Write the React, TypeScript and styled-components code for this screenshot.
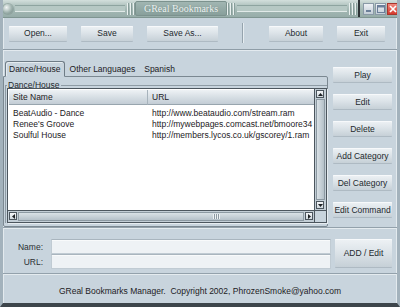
import React from "react"
import styled, { createGlobalStyle } from "styled-components"

const GlobalStyle = createGlobalStyle`
  html, body {
    margin: 0;
    padding: 0;
    background: #c8d4dd;
  }
  body {
    font-family: "Liberation Sans", Arial, sans-serif;
    font-size: 8.5px;
    color: #1d2124;
  }
  * {
    box-sizing: border-box;
  }
`

const bookmarks = [
  { name: "BeatAudio - Dance", url: "http://www.beataudio.com/stream.ram" },
  { name: "Renee's Groove", url: "http://mywebpages.comcast.net/bmoore34" },
  { name: "Soulful House", url: "http://members.lycos.co.uk/gscorey/1.ram" },
]

const sideActions = ["Play", "Edit", "Delete", "Add Category", "Del Category", "Edit Command"]

export default function App() {
  return (
    <>
      <GlobalStyle />
      <Window>
        <TitleBar>
          <TitleOrb />
          <TitleStripe />
          <Grip />
          <TitleLabel>GReal Bookmarks</TitleLabel>
          <Grip />
          <TitleStripe />
          <Grip />
          <TitleDivider />
          <TitleButton>
            <svg width="8" height="8" viewBox="0 0 8 8">
              <rect x="1" y="5" width="5" height="2" fill="#6b7f99" />
            </svg>
          </TitleButton>
          <TitleButton>
            <svg width="8" height="8" viewBox="0 0 8 8">
              <rect x="0.5" y="0.5" width="7" height="7" fill="none" stroke="#6b7f99" />
              <rect x="0.5" y="0.5" width="7" height="2" fill="#6b7f99" />
            </svg>
          </TitleButton>
          <TitleButton $close>
            <svg width="8" height="8" viewBox="0 0 8 8">
              <path d="M1 1 L7 7 M7 1 L1 7" stroke="#fff" strokeWidth="1.6" />
            </svg>
          </TitleButton>
        </TitleBar>

        <Toolbar>
          <Button $w={58}>Open...</Button>
          <Button $w={52} $ml={14}>Save</Button>
          <Button $w={71} $ml={14}>Save As...</Button>
          <ToolSeparator />
          <Button $w={54}>About</Button>
          <Button $w={48} $ml={14}>Exit</Button>
        </Toolbar>

        <Main>
          <LeftPane>
            <TabRow>
              <Tab $active>Dance/House</Tab>
              <Tab>Other Languages</Tab>
              <Tab>Spanish</Tab>
            </TabRow>
            <TabPanel>
              <GroupBox>
                <Legend>Dance/House</Legend>
                <ListFrame>
                  <ListBody>
                    <HeaderRow>
                      <HeaderCell $w={139}>Site Name</HeaderCell>
                      <HeaderCell $w={168}>URL</HeaderCell>
                    </HeaderRow>
                    {bookmarks.map((b) => (
                      <Row key={b.name}>
                        <Cell $w={139}>{b.name}</Cell>
                        <Cell $w={168}>{b.url}</Cell>
                      </Row>
                    ))}
                  </ListBody>
                  <VScroll>
                    <Arrow>
                      <svg width="5" height="3" viewBox="0 0 5 3">
                        <path d="M0 3 L2.5 0 L5 3 Z" fill="#1d2124" />
                      </svg>
                    </Arrow>
                    <Track />
                    <Arrow>
                      <svg width="5" height="3" viewBox="0 0 5 3">
                        <path d="M0 0 L2.5 3 L5 0 Z" fill="#1d2124" />
                      </svg>
                    </Arrow>
                  </VScroll>
                  <HScroll>
                    <Arrow>
                      <svg width="3" height="5" viewBox="0 0 3 5">
                        <path d="M3 0 L0 2.5 L3 5 Z" fill="#1d2124" />
                      </svg>
                    </Arrow>
                    <Track $horizontal>
                      <ThumbGrip />
                    </Track>
                    <Arrow>
                      <svg width="3" height="5" viewBox="0 0 3 5">
                        <path d="M0 0 L3 2.5 L0 5 Z" fill="#1d2124" />
                      </svg>
                    </Arrow>
                  </HScroll>
                  <Corner />
                </ListFrame>
              </GroupBox>
            </TabPanel>
          </LeftPane>
          <SideButtons>
            {sideActions.map((a) => (
              <Button key={a} $w={59}>
                {a}
              </Button>
            ))}
          </SideButtons>
        </Main>

        <Divider />

        <FormRow>
          <Labels>
            <FieldLabel>Name:</FieldLabel>
            <FieldLabel>URL:</FieldLabel>
          </Labels>
          <Fields>
            <Field />
            <Field />
          </Fields>
          <Button $w={57} $h={28} $ml={4}>
            ADD / Edit
          </Button>
        </FormRow>

        <Divider />

        <Footer>GReal Bookmarks Manager.&nbsp; Copyright 2002, PhrozenSmoke@yahoo.com</Footer>
      </Window>
    </>
  )
}

const Window = styled.div`
  width: 400px;
  height: 307px;
  display: flex;
  flex-direction: column;
  background: #c8d4dd;
  border-left: 3px solid #a3b2bc;
  border-right: 3px solid #a3b2bc;
  border-bottom: 4px solid #3d454b;
  box-shadow: inset 1px 0 0 #e3eaee, inset -1px 0 0 #e3eaee;
  overflow: hidden;
`

const TitleBar = styled.div`
  height: 18px;
  margin: 0 -3px;
  display: flex;
  align-items: center;
  padding: 0 2px 0 3px;
  background: linear-gradient(#d3dfdc 0%, #b4c6c2 30%, #a2b7b3 60%, #97ada9 100%);
  border-bottom: 1px solid #7f9591;
`

const TitleOrb = styled.div`
  width: 10px;
  height: 10px;
  border-radius: 50%;
  background: radial-gradient(circle at 35% 35%, #f2f6f5, #9fb2ae 55%, #6c807c);
  box-shadow: 0 0 0 1px #86999599;
`

const TitleStripe = styled.div`
  flex: 1;
  height: 7px;
  margin: 0 2px;
  border-top: 1px solid #8ea4a0;
  border-bottom: 1px solid #e1eae8;
  background: #b6c8c4;
`

const Grip = styled.div`
  width: 8px;
  height: 12px;
  background: repeating-linear-gradient(90deg, #e9f0ef 0 1px, #889e9a 1px 2px, transparent 2px 3px);
`

const TitleLabel = styled.div`
  height: 15px;
  padding: 0 8px;
  display: flex;
  align-items: center;
  font-family: "Liberation Serif", "Times New Roman", serif;
  font-size: 10px;
  color: #eef4f3;
  background: linear-gradient(#a1b6b2, #889f9b);
  border: 1px solid #7c928e;
  border-radius: 2px;
  text-shadow: 0 0 1px #6c817d;
`

const TitleDivider = styled.div`
  width: 2px;
  height: 17px;
  margin: 0 2px 0 1px;
  background: #2d3336;
`

const TitleButton = styled.div<{ $close?: boolean }>`
  width: 11px;
  height: 12px;
  margin-left: 1px;
  display: flex;
  align-items: center;
  justify-content: center;
  border: 1px solid ${(p) => (p.$close ? "#a8352c" : "#8a9aa7")};
  background: ${(p) =>
    p.$close ? "linear-gradient(#f08a7f, #d6392c)" : "linear-gradient(#eef2f6, #c3cdd6)"};
`

const Toolbar = styled.div`
  height: 32px;
  display: flex;
  align-items: center;
  padding: 0 6px 1px 6px;
  border-bottom: 1px solid #8f9da7;
  box-shadow: 0 1px 0 #e3eaef;
`

const Button = styled.div<{ $w: number; $h?: number; $ml?: number }>`
  width: ${(p) => p.$w}px;
  height: ${(p) => p.$h ?? 15}px;
  margin-left: ${(p) => p.$ml ?? 0}px;
  flex-shrink: 0;
  display: flex;
  align-items: center;
  justify-content: center;
  white-space: nowrap;
  color: #23292d;
  background: linear-gradient(#eef2f5 0%, #dde4e9 45%, #c6d0d7 100%);
  border-radius: 1px;
  box-shadow: inset 0 1px 0 #f7f9fb, 0 1px 0 #aebac3;
`

const ToolSeparator = styled.div`
  width: 1px;
  height: 20px;
  margin: 0 26px 0 24px;
  background: #95a3ad;
  box-shadow: 1px 0 0 #e6edf1;
`

const Main = styled.div`
  height: 177px;
  display: flex;
  padding-top: 10px;
`

const LeftPane = styled.div`
  width: 325px;
  display: flex;
  flex-direction: column;
`

const TabRow = styled.div`
  height: 16px;
  display: flex;
  align-items: flex-end;
  padding-left: 2px;
`

const Tab = styled.div<{ $active?: boolean }>`
  height: ${(p) => (p.$active ? 16 : 14)}px;
  padding: 0 3px;
  margin-right: ${(p) => (p.$active ? 2 : 3)}px;
  display: flex;
  align-items: center;
  white-space: nowrap;
  position: relative;
  z-index: 1;
  margin-bottom: ${(p) => (p.$active ? -1 : 0)}px;
  background: #c8d4dd;
  border: ${(p) => (p.$active ? "1px solid #6f7c86" : "none")};
  border-bottom: ${(p) => (p.$active ? "1px solid #c8d4dd" : "none")};
  border-radius: 3px 3px 0 0;
  box-shadow: ${(p) => (p.$active ? "inset 1px 1px 0 #e4ebef" : "none")};
`

const TabPanel = styled.div`
  height: 151px;
  border: 1px solid #7b8891;
  border-radius: 0 2px 2px 2px;
  padding: 0 0 3px 1px;
  display: flex;
`

const GroupBox = styled.fieldset`
  flex: 1;
  margin: 4px 0 0 0;
  padding: 0 0 0 1px;
  min-width: 0;
  display: flex;
  border: none;
  border-top: 1px solid #8e9ba4;
  border-left: 1px solid #8e9ba4;
`

const Legend = styled.legend`
  padding: 0 1px;
  margin-left: 0;
  line-height: 9px;
  color: #23292d;
`

const ListFrame = styled.div`
  flex: 1;
  margin-top: -2px;
  display: grid;
  grid-template-columns: 1fr 12px;
  grid-template-rows: 1fr 12px;
  border: 1px solid #4c565e;
  box-shadow: 1px 1px 0 #e6ecf0;
  background: #c0ccd4;
`

const ListBody = styled.div`
  background: #ffffff;
  overflow: hidden;
  padding: 1px 0 0 1px;
`

const HeaderRow = styled.div`
  height: 15px;
  display: flex;
  margin-bottom: 2px;
`

const HeaderCell = styled.div<{ $w: number }>`
  width: ${(p) => p.$w}px;
  flex-shrink: 0;
  padding-left: 4px;
  display: flex;
  align-items: center;
  background: linear-gradient(#eef2f5, #d5dde3 55%, #c3cdd5);
  border-right: 1px solid #a7b3bc;
  border-bottom: 1px solid #98a5ae;
`

const Row = styled.div`
  height: 11px;
  display: flex;
  align-items: center;
`

const Cell = styled.div<{ $w: number }>`
  width: ${(p) => p.$w}px;
  flex-shrink: 0;
  padding-left: 4px;
  white-space: nowrap;
  overflow: hidden;
`

const VScroll = styled.div`
  display: flex;
  flex-direction: column;
  padding: 1px;
  border-left: 1px solid #4c565e;
  background: #c3ced6;
`

const HScroll = styled.div`
  display: flex;
  padding: 1px;
  border-top: 1px solid #4c565e;
  background: #c3ced6;
`

const Arrow = styled.div`
  width: 8px;
  height: 8px;
  flex-shrink: 0;
  display: flex;
  align-items: center;
  justify-content: center;
  background: linear-gradient(#f4f6f8, #cfd8de);
  border: 1px solid #4c565e;
`

const Track = styled.div<{ $horizontal?: boolean }>`
  flex: 1;
  display: flex;
  align-items: center;
  justify-content: center;
  margin: ${(p) => (p.$horizontal ? "0 1px" : "1px 0")};
  background: ${(p) =>
    p.$horizontal ? "linear-gradient(#d9e1e6, #b5c1c9)" : "linear-gradient(90deg, #d9e1e6, #b5c1c9)"};
  border: 1px solid #8c99a2;
`

const ThumbGrip = styled.div`
  width: 7px;
  height: 5px;
  margin-left: 110px;
  background: repeating-linear-gradient(90deg, #eef2f4 0 1px, #8d9aa3 1px 2px);
`

const Corner = styled.div`
  border-left: 1px solid #4c565e;
  border-top: 1px solid #4c565e;
  background: #c8d4dd;
`

const SideButtons = styled.div`
  display: flex;
  flex-direction: column;
  gap: 12px;
  padding-top: 7px;
  margin-left: 5px;
`

const Divider = styled.div`
  height: 2px;
  flex-shrink: 0;
  border-top: 1px solid #93a1ab;
  border-bottom: 1px solid #e4ebef;
`

const FormRow = styled.div`
  height: 44px;
  display: flex;
  align-items: flex-start;
  padding-top: 10px;
`

const Labels = styled.div`
  width: 48px;
  display: flex;
  flex-direction: column;
`

const FieldLabel = styled.div`
  height: 15px;
  padding-right: 8px;
  display: flex;
  align-items: center;
  justify-content: flex-end;
  color: #2a3034;
`

const Fields = styled.div`
  width: 280px;
  display: flex;
  flex-direction: column;
`

const Field = styled.div`
  height: 15px;
  background: #eef2f5;
  border: 1px solid #c0cbd3;
  border-top-color: #a9b5be;
  box-shadow: inset 0 1px 0 #f8fafb;
`

const Footer = styled.div`
  flex: 1;
  display: flex;
  align-items: center;
  justify-content: center;
  padding-top: 3px;
  color: #1d2124;
`
